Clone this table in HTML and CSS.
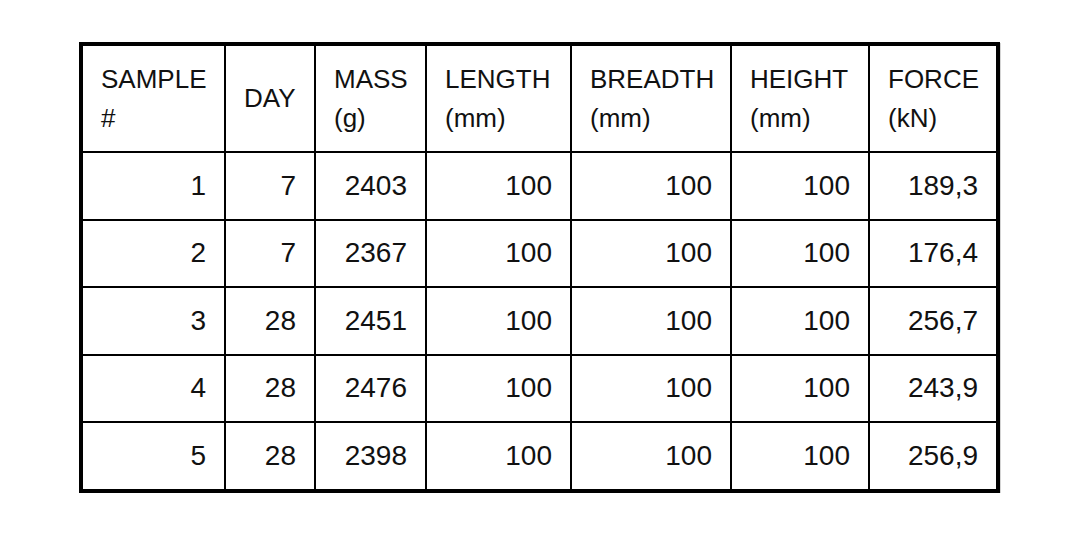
FILE: index.html
```html
<!DOCTYPE html>
<html>
<head>
<meta charset="utf-8">
<link rel="stylesheet" href="styles.css">
</head>
<body>
<div class="page">
<table class="data">
<colgroup>
<col class="c1"><col class="c2"><col class="c3"><col class="c4"><col class="c5"><col class="c6"><col class="c7">
</colgroup>
<thead>
<tr class="head">
<th>SAMPLE<br>#</th>
<th>DAY</th>
<th>MASS<br>(g)</th>
<th>LENGTH<br>(mm)</th>
<th>BREADTH<br>(mm)</th>
<th>HEIGHT<br>(mm)</th>
<th>FORCE<br>(kN)</th>
</tr>
</thead>
<tbody>
<tr><td>1</td><td>7</td><td>2403</td><td>100</td><td>100</td><td>100</td><td>189,3</td></tr>
<tr><td>2</td><td>7</td><td>2367</td><td>100</td><td>100</td><td>100</td><td>176,4</td></tr>
<tr><td>3</td><td>28</td><td>2451</td><td>100</td><td>100</td><td>100</td><td>256,7</td></tr>
<tr><td>4</td><td>28</td><td>2476</td><td>100</td><td>100</td><td>100</td><td>243,9</td></tr>
<tr><td>5</td><td>28</td><td>2398</td><td>100</td><td>100</td><td>100</td><td>256,9</td></tr>
</tbody>
</table>
</div>
</body>
</html>
```
FILE: styles.css
```css
html, body {
  margin: 0;
  padding: 0;
  background: #ffffff;
}
.page {
  padding: 42px 0 0 79px;
}
.data {
  border-collapse: collapse;
  table-layout: fixed;
  width: 921px;
  border: 4px solid #000;
  font-family: "Liberation Sans", Arial, sans-serif;
  color: #111;
  box-shadow: 1px 1px 0 #d4d4d4;
}
.c1 { width: 144px; }
.c2 { width: 90px; }
.c3 { width: 111px; }
.c4 { width: 145px; }
.c5 { width: 160px; }
.c6 { width: 138px; }
.c7 { width: 129px; }
.data th, .data td {
  border: 2px solid #000;
  padding: 0 18px;
  vertical-align: middle;
}
.data th {
  font-weight: 400;
  font-size: 26px;
  text-align: left;
  line-height: 39px;
}
.head {
  height: 108px;
}
.data td {
  font-size: 28px;
  text-align: right;
  height: 65.5px;
  line-height: 30px;
}
```
